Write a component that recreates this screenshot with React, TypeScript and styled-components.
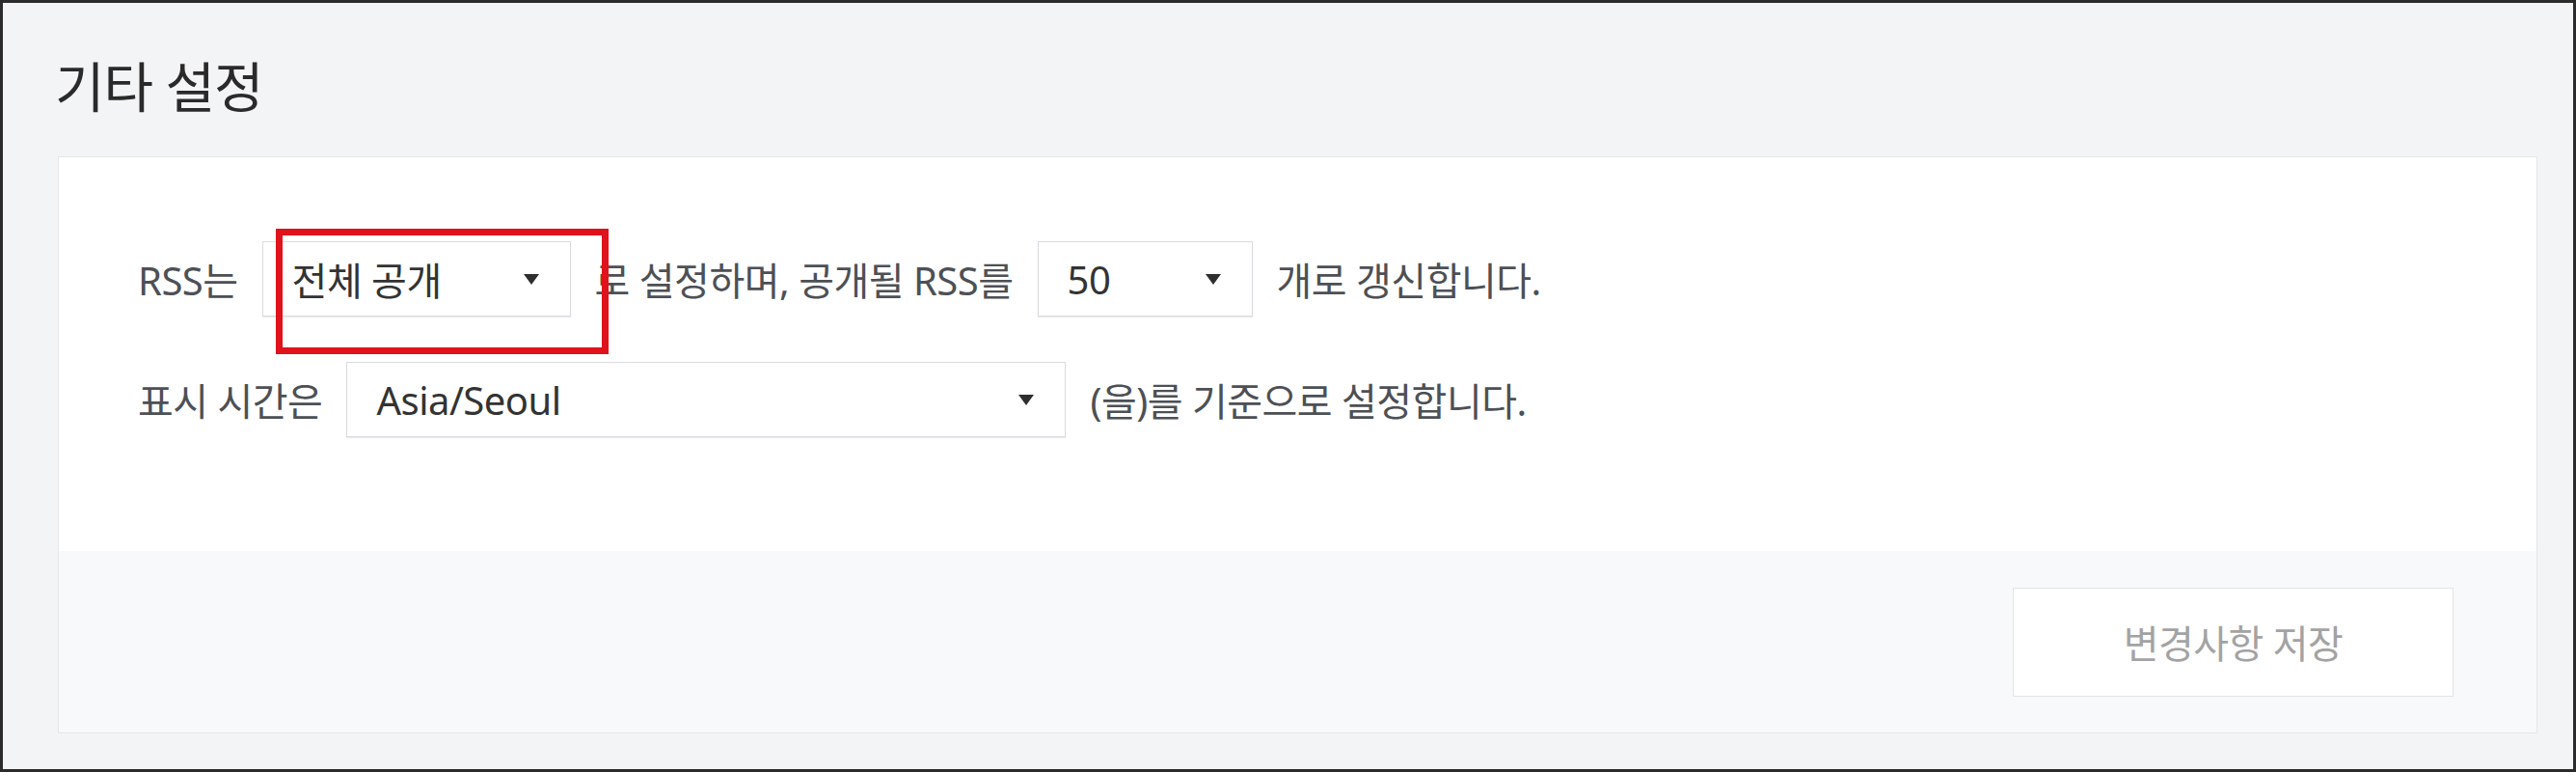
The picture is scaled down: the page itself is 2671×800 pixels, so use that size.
import React from "react";
import styled, { createGlobalStyle } from "styled-components";

const GlobalStyle = createGlobalStyle`
  * { box-sizing: border-box; }
  body {
    margin: 0;
    background: #f3f4f6;
    font-family: "Noto Sans", "Noto Sans CJK KR", sans-serif;
  }
`;

const Frame = styled.div`
  width: 2671px;
  height: 800px;
  border: 3px solid #2b2b2b;
  background: #f3f4f6;
  display: flex;
  flex-direction: column;
`;

const Header = styled.div`
  height: 159px;
  display: flex;
  align-items: center;
  padding: 12px 0 0 54px;
`;

const Title = styled.h2`
  margin: 0;
  font-size: 56px;
  font-weight: 400;
  line-height: 1;
  letter-spacing: -1px;
  color: #2a2a2a;
`;

const Panel = styled.div`
  margin: 0 37px 0 57px;
  height: 598px;
  background: #fff;
  border: 1px solid #e4e6e9;
  display: flex;
  flex-direction: column;
`;

const Body = styled.div`
  flex: 1;
  padding: 87px 86px 0 82px;
  display: flex;
  flex-direction: column;
  gap: 47px;
`;

const Row = styled.div`
  display: flex;
  align-items: center;
  gap: 25px;
  height: 78px;
`;

const Text = styled.span`
  font-size: 40px;
  letter-spacing: -0.5px;
  color: #4d5055;
  white-space: nowrap;
`;

const SelectWrap = styled.div`
  position: relative;
`;

const Select = styled.div<{ $width: number }>`
  width: ${(p) => p.$width}px;
  height: 78px;
  background: #fff;
  border: 1px solid #d9dbde;
  box-shadow: 0 1px 1px rgba(0, 0, 0, 0.08);
  display: flex;
  align-items: center;
  justify-content: space-between;
  padding: 0 32px 0 30px;
  font-size: 40px;
  letter-spacing: -0.5px;
  color: #333;
`;

const Caret = styled.span`
  width: 0;
  height: 0;
  border-left: 8px solid transparent;
  border-right: 8px solid transparent;
  border-top: 11px solid #2e2e2e;
`;

const Highlight = styled.div`
  position: absolute;
  left: 14px;
  top: -13px;
  width: 345px;
  height: 130px;
  border: 7px solid #e0121b;
  pointer-events: none;
`;

const Footer = styled.div`
  height: 188px;
  background: #f8f9fa;
  display: flex;
  align-items: center;
  justify-content: flex-end;
  padding-right: 86px;
`;

const SaveButton = styled.button`
  width: 457px;
  height: 113px;
  background: #fff;
  border: 1px solid #e3e4e6;
  font-family: inherit;
  font-size: 40px;
  letter-spacing: -0.5px;
  color: #a3a3a3;
  cursor: pointer;
`;

const Dropdown: React.FC<{ value: string; width: number; marked?: boolean }> = ({
  value,
  width,
  marked,
}) => (
  <SelectWrap>
    <Select $width={width}>
      <span>{value}</span>
      <Caret />
    </Select>
    {marked && <Highlight />}
  </SelectWrap>
);

export default function App() {
  return (
    <>
      <GlobalStyle />
      <Frame>
        <Header>
          <Title>기타 설정</Title>
        </Header>
        <Panel>
          <Body>
            <Row>
              <Text>RSS는</Text>
              <Dropdown value="전체 공개" width={320} marked />
              <Text>로 설정하며, 공개될 RSS를</Text>
              <Dropdown value="50" width={223} />
              <Text>개로 갱신합니다.</Text>
            </Row>
            <Row>
              <Text>표시 시간은</Text>
              <Dropdown value="Asia/Seoul" width={746} />
              <Text>(을)를 기준으로 설정합니다.</Text>
            </Row>
          </Body>
          <Footer>
            <SaveButton>변경사항 저장</SaveButton>
          </Footer>
        </Panel>
      </Frame>
    </>
  );
}
